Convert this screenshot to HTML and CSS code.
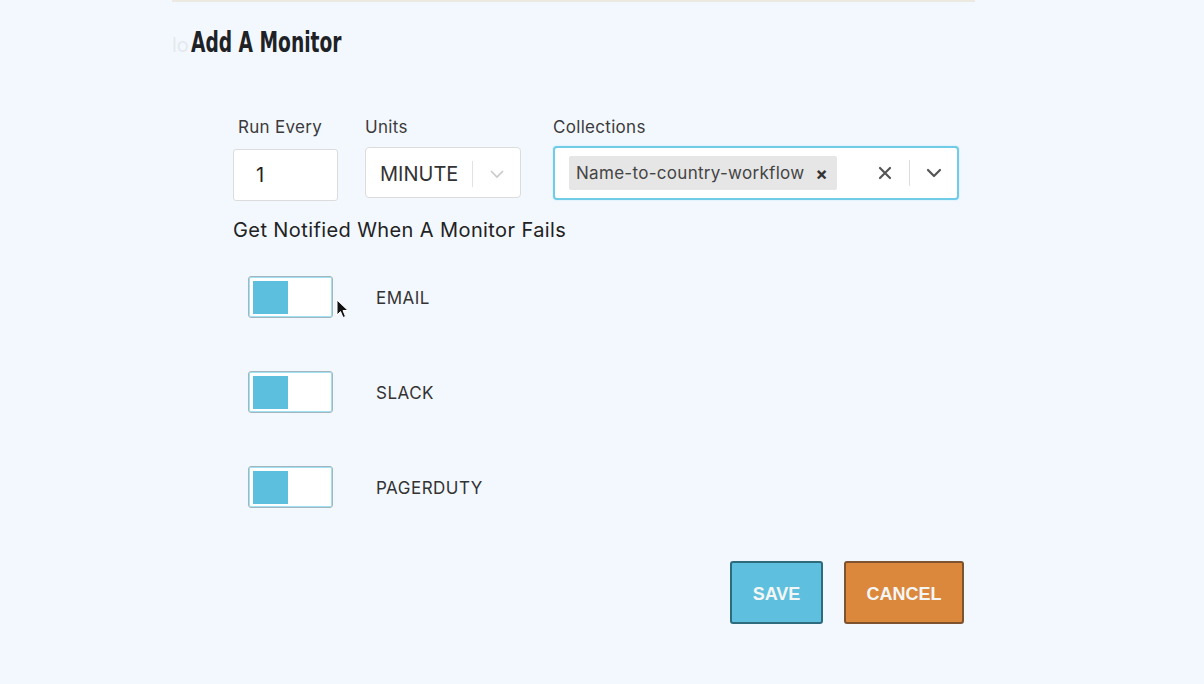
FILE: index.html
```html
<!DOCTYPE html>
<html>
<head>
<meta charset="utf-8">
<link rel="stylesheet" href="styles.css">
</head>
<body>
<div class="panel">
  <div class="title-row">
    <span class="ghost">lo</span>
    <h1 class="title">Add A Monitor</h1>
  </div>
  <form class="form">
    <div class="fields">
      <div class="group g-run">
        <label class="lbl lbl-run">Run Every</label>
        <div class="input">1</div>
      </div>
      <div class="group g-units">
        <label class="lbl">Units</label>
        <div class="select">
          <span class="sel-val">MINUTE</span>
          <span class="sep"></span>
          <svg class="chev-light" width="16" height="10" viewBox="0 0 16 10"><path d="M2 2 L8 8 L14 2" fill="none" stroke="#c9c9c9" stroke-width="1.6"/></svg>
        </div>
      </div>
      <div class="group g-coll">
        <label class="lbl">Collections</label>
        <div class="multi">
          <span class="tag">Name-to-country-workflow<span class="tag-x">×</span></span>
          <span class="spacer"></span>
          <svg class="clear" width="14" height="14" viewBox="0 0 14 14"><path d="M2 2 L12 12 M12 2 L2 12" stroke="#555" stroke-width="2.2" stroke-linecap="round"/></svg>
          <span class="sep sep-dark"></span>
          <svg class="chev" width="18" height="12" viewBox="0 0 18 12"><path d="M3 3 L9 9 L15 3" fill="none" stroke="#555" stroke-width="2.2" stroke-linecap="round" stroke-linejoin="round"/></svg>
        </div>
      </div>
    </div>
    <h2 class="notify">Get Notified When A Monitor Fails</h2>
    <div class="toggles">
      <div class="trow">
        <span class="toggle"><span class="knob"></span></span>
        <span class="tlabel">EMAIL</span>
      </div>
      <div class="trow">
        <span class="toggle"><span class="knob"></span></span>
        <span class="tlabel">SLACK</span>
      </div>
      <div class="trow">
        <span class="toggle"><span class="knob"></span></span>
        <span class="tlabel">PAGERDUTY</span>
      </div>
    </div>
    <div class="actions">
      <button type="button" class="btn btn-save">SAVE</button>
      <button type="button" class="btn btn-cancel">CANCEL</button>
    </div>
  </form>
</div>
<svg class="cursor" width="14" height="22" viewBox="0 0 14 22"><path d="M1 1 L1 16 L4.5 12.5 L7 18.5 L9.5 17.5 L7 11.5 L12 11.5 Z" fill="#111" stroke="#fff" stroke-width="1"/></svg>
</body>
</html>
```

FILE: styles.css
```css
html, body {
  margin: 0;
  padding: 0;
}
body {
  background: #f3f8fe;
  width: 1204px;
  height: 684px;
  overflow: hidden;
  position: relative;
  font-family: "Inter", "Liberation Sans", Arial, sans-serif;
  color: #333;
}
.panel {
  margin-left: 172px;
  width: 803px;
  border-top: 2px solid #ece9e1;
}
.title-row {
  display: flex;
  align-items: baseline;
  padding-top: 25px;
  height: 32px;
}
.ghost {
  color: #e4e8ee;
  font-size: 20px;
  width: 19px;
  overflow: hidden;
  white-space: nowrap;
}
.title {
  margin: 0;
  font-family: "DejaVu Sans Condensed", "DejaVu Sans", sans-serif;
  font-weight: bold;
  font-size: 28px;
  line-height: 32px;
  color: #1e2226;
  transform: scaleX(0.74);
  transform-origin: left center;
  white-space: nowrap;
}
.form {
  padding: 58px 0 0 61px;
}
.fields {
  display: flex;
  align-items: flex-start;
}
.group {
  display: flex;
  flex-direction: column;
}
.g-units { margin-left: 27px; }
.g-coll { margin-left: 32px; }
.lbl {
  font-size: 17px;
  line-height: 20px;
  color: #3b3b3b;
  margin-bottom: 9px;
  letter-spacing: 0.3px;
}
.lbl-run { padding-left: 5px; }
.input {
  box-sizing: border-box;
  width: 105px;
  height: 52px;
  margin-top: 3px;
  background: #fff;
  border: 1px solid #dcdcdc;
  border-radius: 3px;
  font-size: 20px;
  line-height: 50px;
  padding-left: 22px;
  color: #222;
}
.select {
  box-sizing: border-box;
  width: 156px;
  height: 51px;
  margin-top: 1px;
  background: #fff;
  border: 1px solid #dcdcdc;
  border-radius: 4px;
  display: flex;
  align-items: center;
  padding-left: 14px;
  padding-top: 3px;
}
.sel-val {
  font-size: 20px;
  color: #333;
}
.sep {
  width: 1px;
  height: 26px;
  background: #e2e2e2;
  margin-left: 14px;
}
.chev-light { margin-left: 16px; }
.multi {
  box-sizing: border-box;
  width: 406px;
  height: 54px;
  background: #fff;
  border: 2px solid #6fcbe6;
  border-radius: 4px;
  box-shadow: 0 0 2px #b9e6f3;
  display: flex;
  align-items: center;
  padding-left: 14px;
  padding-right: 14px;
}
.tag {
  background: #e6e6e6;
  border-radius: 2px;
  height: 34px;
  display: flex;
  align-items: center;
  padding: 0 9px 0 7px;
  font-size: 17px;
  letter-spacing: 0.3px;
  color: #444;
}
.tag-x {
  margin-left: 11px;
  font-size: 18px;
  font-weight: bold;
  color: #333;
}
.spacer { flex: 1; }
.clear { margin-right: 17px; }
.sep-dark {
  margin-left: 0;
  height: 26px;
  background: #dddddd;
  margin-right: 15px;
}
.notify {
  margin: 17px 0 0 0;
  font-size: 20px;
  line-height: 24px;
  font-weight: normal;
  letter-spacing: 0.4px;
  color: #222;
}
.toggles {
  padding: 34px 0 0 15px;
  display: flex;
  flex-direction: column;
  gap: 53px;
}
.trow {
  display: flex;
  align-items: center;
}
.toggle {
  box-sizing: border-box;
  width: 85px;
  height: 42px;
  background: #fff;
  border: 1px solid #a3b6bd;
  box-shadow: inset 0 0 0 1px #9fe0f2;
  border-radius: 3px;
  padding: 4px 0 0 4px;
  display: block;
}
.knob {
  display: block;
  width: 35px;
  height: 33px;
  background: #5bbfdd;
}
.tlabel {
  margin-left: 43px;
  margin-top: 2px;
  font-size: 17px;
  letter-spacing: 0.5px;
  color: #333;
}
.actions {
  display: flex;
  justify-content: flex-end;
  gap: 21px;
  padding-right: 11px;
  margin-top: 53px;
}
.btn {
  box-sizing: border-box;
  height: 63px;
  border-radius: 3px;
  font-family: "Liberation Sans", Arial, sans-serif;
  font-weight: bold;
  font-size: 18px;
  color: #f4f6f6;
  padding-top: 4px;
  cursor: pointer;
}
.btn-save {
  width: 93px;
  background: #5ec0de;
  border: 2px solid #2e6b7c;
}
.btn-cancel {
  width: 120px;
  background: #dc883c;
  border: 2px solid #7d5330;
}
.cursor {
  position: absolute;
  left: 336px;
  top: 299px;
}
```
